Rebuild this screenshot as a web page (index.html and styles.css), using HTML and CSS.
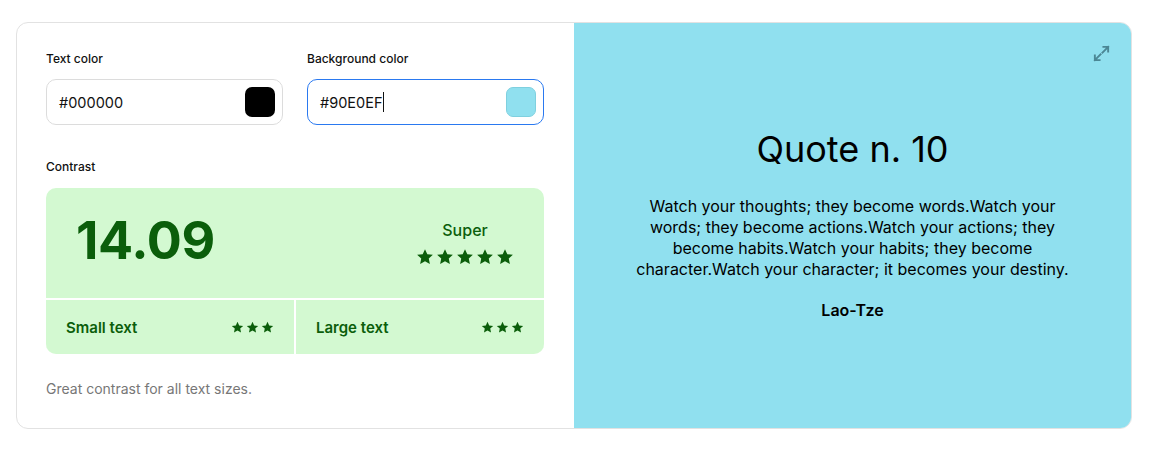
FILE: index.html
```html
<!DOCTYPE html>
<html>
<head>
<meta charset="utf-8">
<link rel="stylesheet" href="styles.css">
</head>
<body>
<div class="card">
  <section class="controls">
    <div class="fields">
      <div class="field">
        <div class="label">Text color</div>
        <div class="input">
          <span class="value">#000000</span>
          <span class="swatch swatch-black"></span>
        </div>
      </div>
      <div class="field">
        <div class="label">Background color</div>
        <div class="input focused">
          <span class="value">#90E0EF<span class="caret"></span></span>
          <span class="swatch swatch-blue"></span>
        </div>
      </div>
    </div>
    <div class="label contrast-label">Contrast</div>
    <div class="contrast">
      <div class="contrast-top">
        <div class="ratio">14.09</div>
        <div class="rating">
          <div class="rating-text">Super</div>
          <div class="stars big">
            <svg viewBox="0 0 24 24"><path d="M12 1.5l3.1 6.7 7.4.8-5.5 5 1.5 7.3L12 17.6l-6.5 3.7L7 14 1.5 9l7.4-.8z"/></svg>
            <svg viewBox="0 0 24 24"><path d="M12 1.5l3.1 6.7 7.4.8-5.5 5 1.5 7.3L12 17.6l-6.5 3.7L7 14 1.5 9l7.4-.8z"/></svg>
            <svg viewBox="0 0 24 24"><path d="M12 1.5l3.1 6.7 7.4.8-5.5 5 1.5 7.3L12 17.6l-6.5 3.7L7 14 1.5 9l7.4-.8z"/></svg>
            <svg viewBox="0 0 24 24"><path d="M12 1.5l3.1 6.7 7.4.8-5.5 5 1.5 7.3L12 17.6l-6.5 3.7L7 14 1.5 9l7.4-.8z"/></svg>
            <svg viewBox="0 0 24 24"><path d="M12 1.5l3.1 6.7 7.4.8-5.5 5 1.5 7.3L12 17.6l-6.5 3.7L7 14 1.5 9l7.4-.8z"/></svg>
          </div>
        </div>
      </div>
      <div class="contrast-bottom">
        <div class="cell">
          <span>Small text</span>
          <div class="stars small">
            <svg viewBox="0 0 24 24"><path d="M12 1.5l3.1 6.7 7.4.8-5.5 5 1.5 7.3L12 17.6l-6.5 3.7L7 14 1.5 9l7.4-.8z"/></svg>
            <svg viewBox="0 0 24 24"><path d="M12 1.5l3.1 6.7 7.4.8-5.5 5 1.5 7.3L12 17.6l-6.5 3.7L7 14 1.5 9l7.4-.8z"/></svg>
            <svg viewBox="0 0 24 24"><path d="M12 1.5l3.1 6.7 7.4.8-5.5 5 1.5 7.3L12 17.6l-6.5 3.7L7 14 1.5 9l7.4-.8z"/></svg>
          </div>
        </div>
        <div class="cell">
          <span>Large text</span>
          <div class="stars small">
            <svg viewBox="0 0 24 24"><path d="M12 1.5l3.1 6.7 7.4.8-5.5 5 1.5 7.3L12 17.6l-6.5 3.7L7 14 1.5 9l7.4-.8z"/></svg>
            <svg viewBox="0 0 24 24"><path d="M12 1.5l3.1 6.7 7.4.8-5.5 5 1.5 7.3L12 17.6l-6.5 3.7L7 14 1.5 9l7.4-.8z"/></svg>
            <svg viewBox="0 0 24 24"><path d="M12 1.5l3.1 6.7 7.4.8-5.5 5 1.5 7.3L12 17.6l-6.5 3.7L7 14 1.5 9l7.4-.8z"/></svg>
          </div>
        </div>
      </div>
    </div>
    <p class="note">Great contrast for all text sizes.</p>
  </section>
  <section class="preview">
    <svg class="expand" viewBox="0 0 20 20" fill="none" stroke="currentColor" stroke-width="2" stroke-linecap="square">
      <path d="M11 9l6-6M12 3h5v5M9 11l-6 6M3 12v5h5"/>
    </svg>
    <div class="quote">
      <h1>Quote n. 10</h1>
      <p class="quote-text">Watch your thoughts; they become words.Watch your words; they become actions.Watch your actions; they become habits.Watch your habits; they become character.Watch your character; it becomes your destiny.</p>
      <p class="author">Lao-Tze</p>
    </div>
  </section>
</div>
</body>
</html>
```

FILE: styles.css
```css
* { box-sizing: border-box; }
html, body { margin: 0; background: #fff; }
body {
  padding: 22px 20px 0 16px;
  font-family: Inter, "Noto Sans", sans-serif;
  color: #111;
}
.card {
  display: grid;
  grid-template-columns: 557px 1fr;
  height: 407px;
  border: 1px solid #e2e2e2;
  border-radius: 12px;
  overflow: hidden;
}
.controls {
  padding: 28px 30px 0 29px;
  display: flex;
  flex-direction: column;
}
.fields {
  display: grid;
  grid-template-columns: 1fr 1fr;
  gap: 24px;
}
.label {
  font-size: 12px;
  font-weight: 500;
  line-height: 16px;
  color: #111;
  margin-bottom: 12px;
}
.input {
  height: 46px;
  border: 1px solid #dcdcdc;
  border-radius: 10px;
  display: flex;
  align-items: center;
  justify-content: space-between;
  padding: 0 7px 0 12px;
}
.input.focused { border-color: #2a79f0; }
.value {
  font-size: 14.5px;
  color: #111;
  display: flex;
  align-items: center;
}
.caret {
  display: inline-block;
  width: 1px;
  height: 20px;
  background: #111;
  margin-left: 1px;
}
.swatch {
  width: 30px;
  height: 30px;
  border-radius: 7px;
}
.swatch-black { background: #000; }
.swatch-blue { background: #90e0ef; border: 1px solid #7fd0df; }
.contrast-label { margin-top: 34px; margin-bottom: 13px; }
.contrast {
  background: #d3f9d1;
  border-radius: 10px;
  overflow: hidden;
  display: flex;
  flex-direction: column;
  color: #0b5e0b;
}
.contrast-top {
  height: 112px;
  display: flex;
  align-items: center;
  justify-content: space-between;
  padding: 0 30px;
  border-bottom: 2px solid #fff;
}
.ratio {
  font-size: 52px;
  font-weight: 700;
  letter-spacing: -0.3px;
  line-height: 1;
  margin-top: -4px;
}
.rating {
  display: flex;
  flex-direction: column;
  align-items: center;
  gap: 8px;
  margin-top: 0;
}
.rating-text { font-size: 16px; font-weight: 500; }
.stars { display: flex; }
.stars svg { fill: #0b5e0b; }
.stars.big { gap: 2px; }
.stars.big svg { width: 18px; height: 18px; }
.stars.small { gap: 2px; }
.stars.small svg { width: 13px; height: 13px; }
.contrast-bottom {
  display: grid;
  grid-template-columns: 1fr 1fr;
  gap: 2px;
  background: #fff;
  height: 54px;
}
.cell {
  background: #d3f9d1;
  display: flex;
  align-items: center;
  justify-content: space-between;
  padding: 0 20px;
  font-size: 15px;
  font-weight: 600;
}
.note {
  margin: 26px 0 0;
  font-size: 14px;
  color: #777;
}
.preview {
  background: #90e0ef;
  position: relative;
  display: flex;
  align-items: center;
  justify-content: center;
}
.expand {
  position: absolute;
  top: 21px;
  right: 20px;
  width: 19px;
  height: 19px;
  color: #4b8795;
}
.quote {
  text-align: center;
  max-width: 440px;
  color: #000;
  margin-bottom: 4px;
}
.quote h1 {
  margin: 0 0 25px;
  font-size: 36px;
  font-weight: 400;
  line-height: 44px;
}
.quote-text {
  margin: 0;
  font-size: 16px;
  line-height: 21px;
}
.author {
  margin: 20px 0 0;
  font-size: 16px;
  font-weight: 600;
  line-height: 21px;
}
```
